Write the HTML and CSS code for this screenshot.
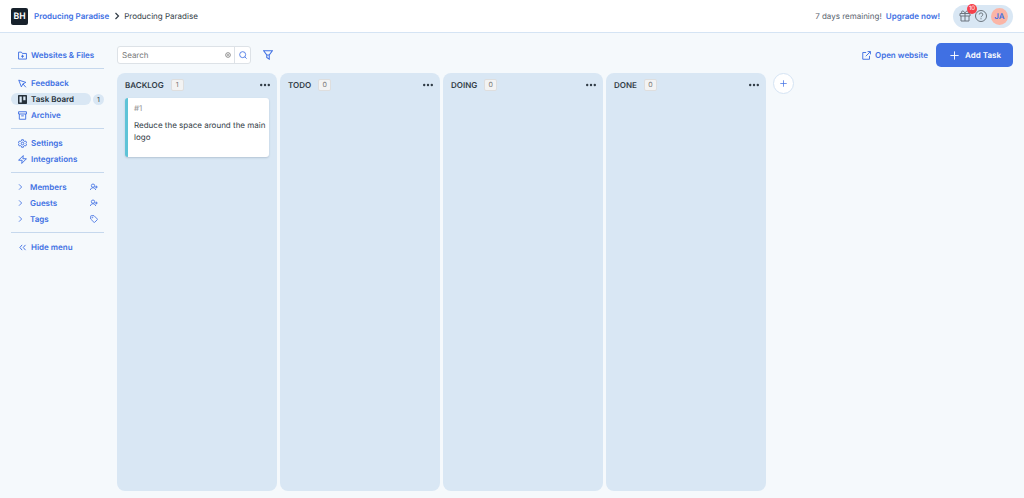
FILE: index.html
```html
<!DOCTYPE html>
<html lang="en">
<head>
    <meta charset="UTF-8">
    <meta name="viewport" content="width=device-width, initial-scale=1.0">
    <title>Producing Paradise - Task Board</title>
    <link rel="stylesheet" href="styles.css">
</head>
<body>
    <header class="topbar">
        <nav class="breadcrumb" aria-label="Breadcrumb">
            <a class="logo" href="#">BH</a>
            <a class="crumb-link" href="#">Producing Paradise</a>
            <svg class="crumb-arrow" viewBox="0 0 8 8"><path d="M2.500 1 5.500 4 2.500 7"/></svg>
            <span>Producing Paradise</span>
        </nav>
        <div class="account">
            <span class="trial">7 days remaining!</span>
            <a class="upgrade" href="#">Upgrade now!</a>
            <div class="account-pill">
                <button class="icon-button gift" aria-label="What's new">
                    <svg viewBox="0 0 24 24"><path d="M2 7h20v5H2zM4 12v10h16V12M12 7v15M12 7H7.500a2.500 2.500 0 1 1 0-5C11 2 12 7 12 7zM12 7h4.500a2.500 2.500 0 1 0 0-5C13 2 12 7 12 7z"/></svg>
                    <span class="gift-count">10</span>
                </button>
                <button class="icon-button" aria-label="Help">
                    <svg viewBox="0 0 24 24"><circle cx="12" cy="12" r="11"/><path d="M8.500 9a3.500 3.500 0 0 1 7 .5c0 2.500-3.500 2.700-3.500 5M12 16.500v2"/></svg>
                </button>
                <button class="avatar">JA</button>
            </div>
        </div>
    </header>

    <div class="layout">
        <aside class="sidebar">
            <div class="menu-group">
                <a class="menu-item" href="#">
                    <svg viewBox="0 0 24 24"><path d="M1.500 3h7.500l2.500 3.500h11v15h-21zM12 10v8M8 14h8"/></svg>
                    <span>Websites &amp; Files</span>
                </a>
            </div>
            <div class="menu-group">
                <a class="menu-item" href="#">
                    <svg viewBox="0 0 24 24"><path d="M2 3l7 18 4-8 8-4zM13 13l8 9"/></svg>
                    <span>Feedback</span>
                </a>
                <div class="menu-row">
                    <a class="menu-item active" href="#">
                        <svg viewBox="0 0 24 24"><path class="solid" fill-rule="evenodd" d="M2 0h20a2 2 0 0 1 2 2v20a2 2 0 0 1-2 2H2a2 2 0 0 1-2-2V2a2 2 0 0 1 2-2zM4 4v16h6V4zM14 4v10h6V4z"/></svg>
                        <span>Task Board</span>
                    </a>
                    <span class="menu-count">1</span>
                </div>
                <a class="menu-item" href="#">
                    <svg viewBox="0 0 24 24"><path d="M1.500 2h21v6h-21zM3.500 8v14h17V8M8.500 13h7"/></svg>
                    <span>Archive</span>
                </a>
            </div>
            <div class="menu-group">
                <a class="menu-item" href="#">
                    <svg viewBox="0 0 24 24"><circle cx="12" cy="12" r="3.500"/><path d="M9.500 2h5l.7 3.200 2.300 1.300 3.100-1 2.400 4.300-2.400 2.200 2.400 2.200-2.400 4.300-3.100-1-2.300 1.300-.7 3.200h-5l-.7-3.200-2.300-1.300-3.100 1L1 14.200 3.400 12 1 9.800l2.400-4.300 3.100 1 2.300-1.300z"/></svg>
                    <span>Settings</span>
                </a>
                <a class="menu-item" href="#">
                    <svg viewBox="0 0 24 24"><path d="M14 1.500 1.500 14H11l-1 8.500L22.500 10H13z"/></svg>
                    <span>Integrations</span>
                </a>
            </div>
            <div class="menu-group">
                <div class="menu-row">
                    <a class="menu-item expandable" href="#"><svg viewBox="0 0 18 24"><path d="M3 4l8 8-8 8"/></svg><span>Members</span></a>
                    <button class="menu-action" aria-label="Add member"><svg viewBox="0 0 24 24"><circle cx="9" cy="8" r="5"/><path d="M1 21c1-9 15-9 16 0M19 8v8M15 12h8"/></svg></button>
                </div>
                <div class="menu-row">
                    <a class="menu-item expandable" href="#"><svg viewBox="0 0 18 24"><path d="M3 4l8 8-8 8"/></svg><span>Guests</span></a>
                    <button class="menu-action" aria-label="Add guest"><svg viewBox="0 0 24 24"><circle cx="9" cy="8" r="5"/><path d="M1 21c1-9 15-9 16 0M19 8v8M15 12h8"/></svg></button>
                </div>
                <div class="menu-row">
                    <a class="menu-item expandable" href="#"><svg viewBox="0 0 18 24"><path d="M3 4l8 8-8 8"/></svg><span>Tags</span></a>
                    <button class="menu-action" aria-label="Edit tags"><svg viewBox="0 0 24 24"><path d="M2 4a2 2 0 0 1 2-2h8l10 10a2 2 0 0 1 0 2l-8 8a2 2 0 0 1-2 0L2 12z"/><circle cx="7.500" cy="7.500" r="1"/></svg></button>
                </div>
            </div>
            <div class="menu-group">
                <a class="menu-item" href="#">
                    <svg viewBox="0 0 24 24"><path d="M11 5l-6 7 6 7M20 5l-6 7 6 7"/></svg>
                    <span>Hide menu</span>
                </a>
            </div>
        </aside>

        <main class="content">
            <div class="toolbar">
                <form class="search">
                    <input class="search-input" type="text" placeholder="Search" aria-label="Search">
                    <button class="search-clear" type="reset" aria-label="Clear"><svg viewBox="0 0 24 24"><circle cx="12" cy="12" r="7"/><path d="M10 10l4 4M14 10l-4 4"/></svg></button>
                    <button class="search-submit" type="submit" aria-label="Search"><svg viewBox="0 0 24 24"><circle cx="11" cy="11" r="9"/><path d="M17.500 17.500 23 23"/></svg></button>
                </form>
                <button class="filter" aria-label="Filter"><svg viewBox="0 0 24 24"><path d="M1.500 2h21L15 12v10l-6-4v-6zM8 12h8"/></svg></button>
                <a class="open-website" href="#">
                    <svg viewBox="0 0 24 24"><path d="M11 4H2v18h18v-9M15 1.500h7.500V9M22.500 1.500 10 14"/></svg>
                    <span>Open website</span>
                </a>
                <button class="add-task">
                    <svg viewBox="0 0 24 24"><path d="M12 1v22M1 12h22"/></svg>
                    <span>Add Task</span>
                </button>
            </div>

            <div class="board">
                <section class="column">
                    <div class="column-head">
                        <h2>BACKLOG</h2>
                        <span class="column-count">1</span>
                        <button class="more" aria-label="Backlog options"><svg viewBox="0 0 10 4"><circle cx="1.200" cy="2" r="1.200"/><circle cx="5" cy="2" r="1.200"/><circle cx="8.800" cy="2" r="1.200"/></svg></button>
                    </div>
                    <article class="card">
                        <span class="card-id">#1</span>
                        <p class="card-title">Reduce the space around the main logo</p>
                    </article>
                </section>
                <section class="column">
                    <div class="column-head">
                        <h2>TODO</h2>
                        <span class="column-count">0</span>
                        <button class="more" aria-label="Todo options"><svg viewBox="0 0 10 4"><circle cx="1.200" cy="2" r="1.200"/><circle cx="5" cy="2" r="1.200"/><circle cx="8.800" cy="2" r="1.200"/></svg></button>
                    </div>
                </section>
                <section class="column">
                    <div class="column-head">
                        <h2>DOING</h2>
                        <span class="column-count">0</span>
                        <button class="more" aria-label="Doing options"><svg viewBox="0 0 10 4"><circle cx="1.200" cy="2" r="1.200"/><circle cx="5" cy="2" r="1.200"/><circle cx="8.800" cy="2" r="1.200"/></svg></button>
                    </div>
                </section>
                <section class="column">
                    <div class="column-head">
                        <h2>DONE</h2>
                        <span class="column-count">0</span>
                        <button class="more" aria-label="Done options"><svg viewBox="0 0 10 4"><circle cx="1.200" cy="2" r="1.200"/><circle cx="5" cy="2" r="1.200"/><circle cx="8.800" cy="2" r="1.200"/></svg></button>
                    </div>
                </section>
                <button class="add-column" aria-label="Add column"><svg viewBox="0 0 24 24"><path d="M12 1v22M1 12h22"/></svg></button>
            </div>
        </main>
    </div>
</body>
</html>
```
FILE: styles.css
```css
* {
    box-sizing: border-box;
}

body {
    margin: 0;
    min-height: 100vh;
    display: flex;
    flex-direction: column;
    background: #f5f9fc;
    color: #313c46;
    font-family: 'Inter', sans-serif;
    font-size: 8px;
    line-height: 12px;
    text-rendering: geometricPrecision;
}

a {
    color: #4070e3;
    font-weight: 600;
    text-decoration: none;
}

button,
input {
    padding: 0;
    border: 0;
    background: none;
    font: inherit;
    text-rendering: inherit;
}

button {
    display: flex;
    align-items: center;
    justify-content: center;
    color: #4070e3;
    cursor: pointer;
}

svg {
    display: block;
    flex: none;
    fill: none;
    stroke: currentColor;
    stroke-width: 2.5;
}

/* Top bar */
.topbar {
    display: flex;
    justify-content: space-between;
    align-items: center;
    height: 33px;
    padding: 0 11px;
    background: #fff;
    border-bottom: 1px solid #d5e4f4;
}

.breadcrumb,
.account {
    display: flex;
    align-items: center;
}

.logo {
    width: 17px;
    height: 17px;
    margin-right: 6px;
    border-radius: 2px;
    background: #17212b;
    color: #fff;
    font-family: 'Roboto', sans-serif;
    font-size: 9px;
    line-height: 18px;
    text-align: center;
}

.crumb-arrow {
    width: 8px;
    height: 8px;
    margin: 0 3px 0 4px;
    stroke-width: 1.2;
}

.trial {
    color: #59636d;
}

.upgrade {
    margin: 0 13px 0 4px;
}

.account-pill {
    display: flex;
    align-items: center;
    gap: 4px;
    height: 23px;
    padding: 0 5px 0 6px;
    border-radius: 12px;
    background: #d9e7f4;
}

.icon-button {
    position: relative;
    color: #6c757e;
}

.icon-button svg {
    width: 12px;
    height: 12px;
    stroke-width: 2;
}

.gift-count {
    position: absolute;
    top: -6px;
    left: 8px;
    width: 10px;
    height: 10px;
    border-radius: 50%;
    background: #f5414b;
    color: #fff;
    font-size: 6px;
    line-height: 10px;
}

.avatar {
    width: 17px;
    height: 17px;
    border-radius: 50%;
    background: #fab5a6;
    font-weight: 600;
}

/* Sidebar */
.layout {
    flex: 1;
    display: flex;
}

.sidebar {
    width: 104px;
    padding: 9px 0 0 11px;
}

.menu-group {
    display: flex;
    flex-direction: column;
    gap: 4px;
    padding: 8px 0 7px;
}

.menu-group:first-child {
    padding-top: 7px;
}

.menu-group + .menu-group {
    border-top: 1px solid #c6d8ed;
}

.menu-row {
    display: flex;
    align-items: center;
    justify-content: space-between;
}

.menu-item {
    display: flex;
    align-items: center;
    gap: 4px;
    height: 12px;
    padding-left: 7px;
}

.menu-item svg {
    width: 9px;
    height: 9px;
}

.menu-item.active {
    width: 80px;
    border-radius: 6px;
    background: #d9e7f4;
    color: #26313b;
}

.solid {
    fill: currentColor;
    stroke: none;
}

.menu-count {
    width: 11px;
    height: 11px;
    border-radius: 50%;
    background: #d9e7f4;
    font-size: 7px;
    line-height: 11px;
    text-align: center;
}

.menu-item.expandable {
    gap: 6px;
}

.menu-item.expandable svg {
    width: 6px;
    height: 8px;
}

.menu-action {
    margin-right: 6px;
}

.menu-action svg {
    width: 8px;
    height: 8px;
}

/* Toolbar */
.content {
    flex: 1;
    display: flex;
    flex-direction: column;
    padding: 10px 11px 7px 13px;
}

.toolbar {
    display: flex;
    align-items: center;
    height: 24px;
    margin-bottom: 6px;
}

.search {
    display: flex;
    width: 134px;
    height: 18px;
    border: 1px solid #dde2e7;
    border-radius: 3px;
    background: #fff;
}

.search-input {
    flex: 1;
    min-width: 0;
    padding: 0 4px;
    outline: 0;
    color: inherit;
}

.search-input::placeholder {
    color: #777;
    opacity: 1;
}

.search-clear {
    margin-right: 2px;
    color: #777;
}

.search-submit {
    width: 16px;
    border-left: 1px solid #dde2e7;
}

.search svg {
    width: 8px;
    height: 8px;
}

.filter {
    margin-left: 12px;
}

.filter svg {
    width: 10px;
    height: 10px;
}

.open-website {
    display: flex;
    align-items: center;
    gap: 4px;
    margin-left: auto;
    margin-right: 8px;
}

.open-website svg {
    width: 9px;
    height: 9px;
}

.add-task {
    gap: 6px;
    height: 24px;
    padding: 0 12px 0 14px;
    border-radius: 5px;
    background: #4070e3;
    color: #fff;
    font-weight: 600;
}

.add-task svg {
    width: 9px;
    height: 9px;
}

/* Board */
.board {
    flex: 1;
    display: flex;
    gap: 3px;
}

.column {
    width: 160px;
    padding: 6px 8px;
    border-radius: 8px;
    background: #d9e7f4;
}

.column-head {
    display: flex;
    align-items: center;
    height: 12px;
    margin-bottom: 7px;
}

.column-head h2 {
    margin: 0;
    font-size: 8px;
    font-weight: 600;
}

.column-count {
    width: 13px;
    height: 12px;
    margin-left: 7px;
    border: 1px solid #dedede;
    border-radius: 2px;
    background: #f3f3f3;
    color: #777;
    font-size: 7px;
    line-height: 10px;
    text-align: center;
}

.more {
    margin-left: auto;
    margin-right: -1px;
    color: #313c46;
}

.more svg {
    width: 10px;
    height: 4px;
    fill: currentColor;
    stroke: none;
}

.card {
    min-height: 59px;
    padding: 4px 2px 4px 6px;
    border-left: 3px solid #5ec3d7;
    border-radius: 3px;
    background: #fff;
    box-shadow: 0 1px 2px #b4c4d4;
}

.card-id {
    color: #999;
}

.card-title {
    margin: 5px 0 0;
}

.add-column {
    width: 21px;
    height: 21px;
    margin-left: 4px;
    border: 1px solid #d5e4f4;
    border-radius: 50%;
    background: #fff;
}

.add-column svg {
    width: 7px;
    height: 7px;
}
```
